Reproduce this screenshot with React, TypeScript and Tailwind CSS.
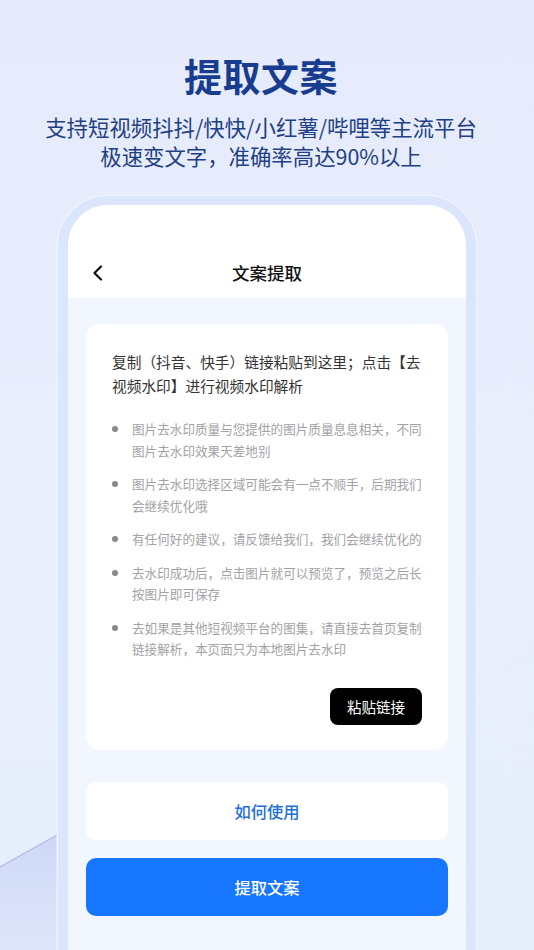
import React from 'react';

const tips = [
  '图片去水印质量与您提供的图片质量息息相关，不同图片去水印效果天差地别',
  '图片去水印选择区域可能会有一点不顺手，后期我们会继续优化哦',
  '有任何好的建议，请反馈给我们，我们会继续优化的',
  '去水印成功后，点击图片就可以预览了，预览之后长按图片即可保存',
  '去如果是其他短视频平台的图集，请直接去首页复制链接解析，本页面只为本地图片去水印',
];

const font = { fontFamily: '"Noto Sans CJK SC", "Noto Sans", sans-serif' };

export default function App() {
  return (
    <div
      className="relative w-[534px] h-[950px] overflow-hidden bg-gradient-to-b from-[#e5ebfb] via-[#e8eefc] to-[#e6edfb] flex flex-col items-center"
      style={font}
    >
      {/* background decoration bottom-left */}
      <svg className="absolute left-0 bottom-0" width="80" height="150" viewBox="0 0 80 150">
        <defs>
          <linearGradient id="deco" x1="0" y1="0" x2="0" y2="1">
            <stop offset="0" stopColor="#cdd7f5" />
            <stop offset="1" stopColor="#dfe6fa" />
          </linearGradient>
        </defs>
        <polygon points="0,67 66,30 66,150 0,150" fill="url(#deco)" />
        <line x1="0" y1="67" x2="66" y2="30" stroke="#aebbe6" strokeWidth="1.2" />
      </svg>

      {/* heading */}
      <h1 className="relative mt-[52px] mr-[12px] text-[38px] leading-[46px] font-bold text-[#183d90] tracking-[0.5px]">
        提取文案
      </h1>
      <p className="relative mt-[14px] mr-[12px] text-[21.4px] leading-[29px] text-[#1f3f86] text-center">
        支持短视频抖抖/快快/小红薯/哔哩等主流平台
        <br />
        极速变文字，准确率高达90%以上
      </p>

      {/* phone frame */}
      <div className="relative mt-[26px] w-[418px] flex-1 rounded-t-[50px] bg-[#dbe6fc] pt-[9px] px-[10px] shadow-[0_0_0_1.5px_#eef3fe]">
        <div className="h-full rounded-t-[40px] overflow-hidden bg-[#f2f6fe] flex flex-col">
          {/* nav bar */}
          <div className="relative h-[93px] bg-white flex items-end justify-center pb-[13px]">
            <svg
              className="absolute left-[23px] bottom-[17px]"
              width="14"
              height="16"
              viewBox="0 0 14 16"
            >
              <path d="M10 1.5 L3.5 8 L10 14.5" fill="none" stroke="#111" strokeWidth="2.2" strokeLinecap="round" strokeLinejoin="round" />
            </svg>
            <span className="text-[17.5px] leading-[24px] font-medium text-[#111]">文案提取</span>
          </div>

          <div className="px-[18px] pt-[26px] flex flex-col">
            {/* card */}
            <div className="h-[426px] bg-white rounded-[14px] pl-[26px] pr-[24px] pt-[26px] pb-[25px] flex flex-col">
              <p className="text-[14.7px] leading-[24px] text-[#333]">
                复制（抖音、快手）链接粘贴到这里；点击【去视频水印】进行视频水印解析
              </p>
              <ul className="mt-[20px] flex flex-col gap-[12px]">
                {tips.map((t) => (
                  <li key={t} className="flex items-start">
                    <span className="mt-[8px] w-[6px] h-[6px] rounded-full bg-[#8a8a8f] shrink-0" />
                    <span className="ml-[14px] text-[12.6px] leading-[21.5px] text-[#a2a2a6]">{t}</span>
                  </li>
                ))}
              </ul>
              <button className="mt-auto self-end mr-[2px] w-[92px] h-[37px] rounded-[8px] bg-black text-white text-[14.5px]">
                粘贴链接
              </button>
            </div>

            <button className="mt-[32px] h-[58px] rounded-[10px] bg-white text-[#2470d8] text-[16.3px] font-medium">
              如何使用
            </button>
            <button className="mt-[18px] h-[58px] rounded-[10px] bg-[#1677fe] text-white text-[16.3px] font-medium">
              提取文案
            </button>
          </div>
        </div>
      </div>
    </div>
  );
}
